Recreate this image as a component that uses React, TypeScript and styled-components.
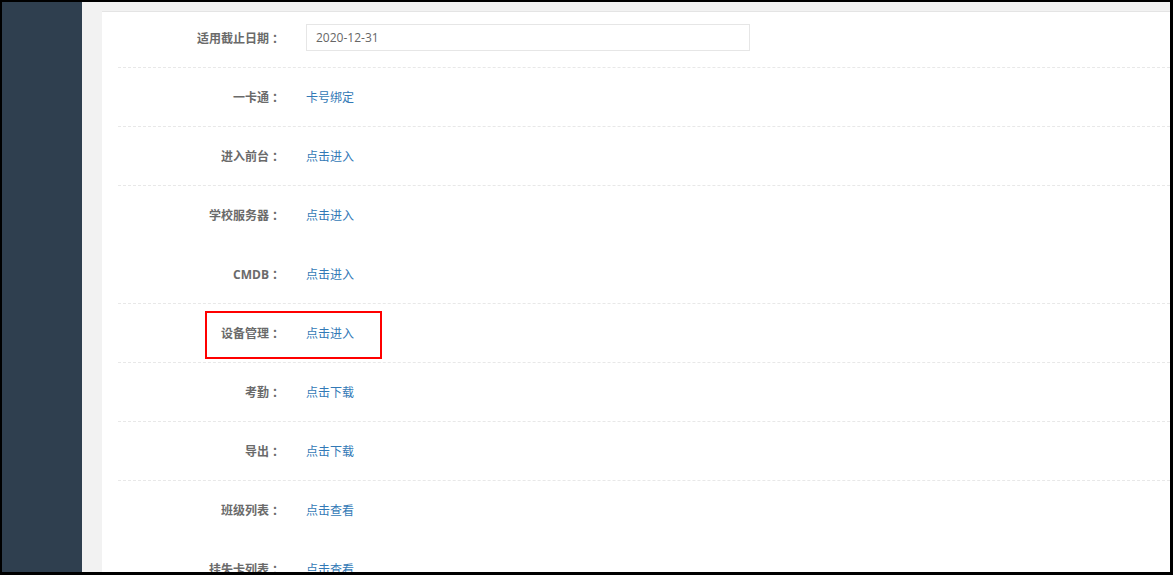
import React from 'react'
import styled, { createGlobalStyle } from 'styled-components'

type Field = {
    label: string
    link?: string
    date?: string
    plain?: boolean
    marked?: boolean
}

const fields: Field[] = [
    { label: '适用截止日期', date: '2020-12-31' },
    { label: '一卡通', link: '卡号绑定' },
    { label: '进入前台', link: '点击进入' },
    { label: '学校服务器', link: '点击进入', plain: true },
    { label: 'CMDB', link: '点击进入' },
    { label: '设备管理', link: '点击进入', marked: true },
    { label: '考勤', link: '点击下载' },
    { label: '导出', link: '点击下载' },
    { label: '班级列表', link: '点击查看', plain: true },
    { label: '挂失卡列表', link: '点击查看' }
]

const App: React.FunctionComponent = () => {
    return (
        <>
            <GlobalStyle/>
            <Frame>
                <Sidebar/>
                <Main>
                    <Panel>
                        {fields.map((field, index) => (
                            <Row
                                key={index}
                                $first={index === 0}
                                $plain={field.plain}
                            >
                                <Label>
                                    {field.label}
                                    <Colon>：</Colon>
                                </Label>
                                {field.date ? (
                                    <DateInput
                                        readOnly
                                        value={field.date}
                                    />
                                ) : (
                                    <Link href="#">
                                        {field.link}
                                    </Link>
                                )}
                                {field.marked && <Highlight/>}
                            </Row>
                        ))}
                    </Panel>
                </Main>
            </Frame>
        </>
    )
}

export default App

const GlobalStyle = createGlobalStyle`
    html, body {
        margin: 0;
        padding: 0;
        background: #000;
    }

    body {
        font-family: "Open Sans", "Noto Sans CJK SC", sans-serif;
    }
`

const Frame = styled.div`
    display: flex;
    box-sizing: border-box;
    width: 1173px;
    height: 575px;
    border-style: solid;
    border-color: #000;
    border-width: 2px 3px 3px 2px;
    overflow: hidden;
`

const Sidebar = styled.div`
    flex: 0 0 80px;
    background-color: #2f3f4f;
`

const Main = styled.div`
    flex: 1;
    display: flex;
    flex-direction: column;
    background-color: #f2f2f2;
    padding: 9px 0 0 20px;
    overflow: hidden;
`

const Panel = styled.div`
    flex: 1;
    background-color: #fff;
    border-top: 1px solid #e4e4e4;
    padding-left: 16px;
`

const Row = styled.div<{ $first?: boolean, $plain?: boolean }>`
    position: relative;
    display: grid;
    grid-template-columns: 172px 1fr;
    column-gap: 16px;
    align-items: center;
    box-sizing: border-box;
    height: ${({ $first }) => $first ? '56px' : '59px'};
    padding-bottom: ${({ $first }) => $first ? '4px' : '0'};
    border-bottom: 1px dashed ${({ $plain }) => $plain ? 'transparent' : '#e8e8e8'};
`

const Label = styled.div`
    display: flex;
    justify-content: flex-end;
    align-items: center;
    padding-right: 6px;
    font-size: 12px;
    font-weight: 700;
    color: #6a6a6a;
    white-space: nowrap;
`

const Colon = styled.span`
    margin-left: 3px;
`

const Link = styled.a`
    justify-self: start;
    font-size: 12px;
    color: #3279b6;
    text-decoration: none;
`

const DateInput = styled.input`
    box-sizing: border-box;
    width: 444px;
    height: 27px;
    padding: 0 9px;
    border: 1px solid #e6e6e6;
    outline: none;
    font-family: "Open Sans", "Noto Sans CJK SC", sans-serif;
    font-size: 12px;
    color: #666;
    background: #fff;
`

const Highlight = styled.div`
    position: absolute;
    left: 87px;
    top: 7px;
    width: 177px;
    height: 48px;
    box-sizing: border-box;
    border: 2px solid #f00;
    pointer-events: none;
`
